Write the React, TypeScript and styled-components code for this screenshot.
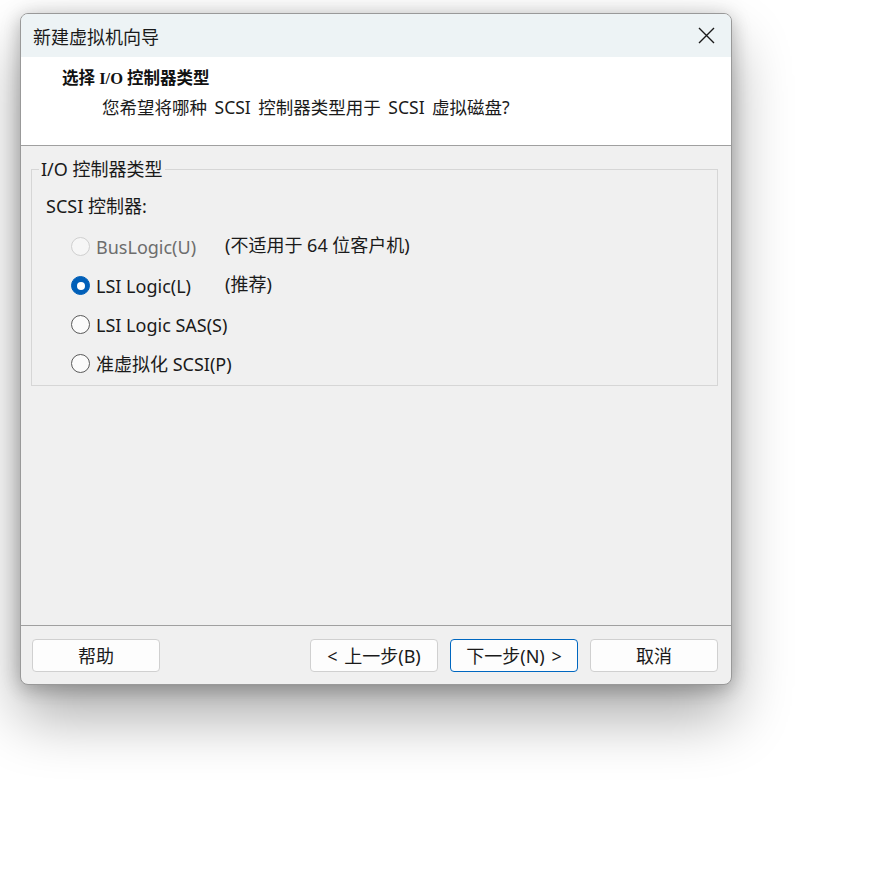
import React from "react";
import styled, { createGlobalStyle } from "styled-components";

const GlobalStyle = createGlobalStyle`
  html, body { margin: 0; padding: 0; background: #ffffff; }
  body {
    font-family: "Noto Sans", "Noto Sans CJK SC", sans-serif;
    color: #1a1a1a;
  }
  * { box-sizing: border-box; }
`;

const Page = styled.div`
  width: 896px;
  height: 875px;
  padding: 13px 0 0 20px;
`;

const Window = styled.div`
  width: 712px;
  height: 672px;
  display: flex;
  flex-direction: column;
  border: 1px solid #999999;
  border-radius: 8px;
  overflow: hidden;
  background: #f0f0f0;
  box-shadow: 0 32px 60px rgba(0, 0, 0, 0.33), 0 6px 18px rgba(0, 0, 0, 0.16),
    0 0 22px rgba(0, 0, 0, 0.12);
`;

const TitleBar = styled.div`
  height: 43px;
  flex: none;
  display: flex;
  align-items: center;
  justify-content: space-between;
  background: #edf3f5;
  padding: 0 16px 0 12px;
`;

const TitleText = styled.span`
  font-family: "Noto Sans CJK SC", sans-serif;
  font-size: 18px;
  color: #1a1a1a;
  line-height: 1;
`;

const CloseButton = styled.div`
  width: 18px;
  height: 18px;
  display: flex;
  align-items: center;
  justify-content: center;
`;

const Header = styled.div`
  height: 89px;
  flex: none;
  background: #ffffff;
  padding: 11px 0 0 41px;
  border-bottom: 1px solid #a0a0a0;
`;

const HeaderTitle = styled.div`
  font-family: "Liberation Serif", "Noto Sans CJK SC", serif;
  font-weight: 700;
  font-size: 16.5px;
  line-height: 22px;
  color: #111;
`;

const HeaderSub = styled.div`
  margin: 6px 0 0 40px;
  font-size: 17.5px;
  line-height: 22px;
  word-spacing: 3px;
  color: #1a1a1a;
`;

const Body = styled.div`
  flex: 1;
  padding: 0 13px 0 10px;
  border-bottom: 1px solid #a0a0a0;
`;

const GroupBox = styled.fieldset`
  margin: 13px 0 0 0;
  padding: 0 14px 2px 14px;
  border: 1px solid #d6d6d6;
  min-width: 0;
`;

const Legend = styled.legend`
  margin-left: -7px;
  padding: 0 2px;
  font-size: 18px;
  line-height: 20px;
  color: #1a1a1a;
`;

const GroupLabel = styled.div`
  margin-top: 16px;
  font-size: 18px;
  line-height: 22px;
`;

const Options = styled.div`
  margin-top: 10px;
  padding-left: 25px;
  display: grid;
  grid-template-columns: 154px auto;
  grid-auto-rows: 39px;
  align-items: center;
`;

const OptionLabel = styled.label<{ $disabled?: boolean }>`
  display: flex;
  align-items: center;
  gap: 6px;
  font-size: 18px;
  line-height: 22px;
  white-space: nowrap;
  color: ${(p) => (p.$disabled ? "#6d6d6d" : "#1a1a1a")};
`;

const Radio = styled.span<{ $checked?: boolean; $disabled?: boolean }>`
  width: 19px;
  height: 19px;
  flex: none;
  border-radius: 50%;
  display: flex;
  align-items: center;
  justify-content: center;
  border: 1px solid
    ${(p) => (p.$checked ? "#005fb8" : p.$disabled ? "#cfcfcf" : "#5a5a5a")};
  background: ${(p) =>
    p.$checked ? "#005fb8" : p.$disabled ? "#f6f6f6" : "#fbfbfb"};
  &::after {
    content: "";
    display: ${(p) => (p.$checked ? "block" : "none")};
    width: 8px;
    height: 8px;
    border-radius: 50%;
    background: #ffffff;
  }
`;

const Note = styled.span`
  font-size: 18px;
  line-height: 22px;
  color: #1a1a1a;
  margin-top: -4px;
`;

const Footer = styled.div`
  height: 58px;
  flex: none;
  display: flex;
  align-items: flex-start;
  padding: 13px 13px 0 11px;
  gap: 12px;
`;

const Spacer = styled.div`
  flex: 1;
`;

const Button = styled.button<{ $primary?: boolean }>`
  width: 128px;
  height: 33px;
  border-radius: 4px;
  border: 1px solid ${(p) => (p.$primary ? "#0067c0" : "#d0d0d0")};
  background: #fdfdfd;
  font-family: "Noto Sans", "Noto Sans CJK SC", sans-serif;
  font-size: 18px;
  word-spacing: 2px;
  color: #1a1a1a;
  padding: 0;
  display: flex;
  align-items: center;
  justify-content: center;
  line-height: 1;
`;

const options = [
  { label: "BusLogic(U)", note: "(不适用于 64 位客户机)", disabled: true },
  { label: "LSI Logic(L)", note: "(推荐)", checked: true },
  { label: "LSI Logic SAS(S)" },
  { label: "准虚拟化 SCSI(P)" },
];

export default function App() {
  return (
    <Page>
      <GlobalStyle />
      <Window>
        <TitleBar>
          <TitleText>新建虚拟机向导</TitleText>
          <CloseButton>
            <svg width="17" height="17" viewBox="0 0 17 17">
              <path
                d="M1 1 L16 16 M16 1 L1 16"
                stroke="#1a1a1a"
                strokeWidth="1.4"
                fill="none"
              />
            </svg>
          </CloseButton>
        </TitleBar>
        <Header>
          <HeaderTitle>选择 I/O 控制器类型</HeaderTitle>
          <HeaderSub>您希望将哪种 SCSI 控制器类型用于 SCSI 虚拟磁盘?</HeaderSub>
        </Header>
        <Body>
          <GroupBox>
            <Legend>I/O 控制器类型</Legend>
            <GroupLabel>SCSI 控制器:</GroupLabel>
            <Options>
              {options.map((o) => (
                <React.Fragment key={o.label}>
                  <OptionLabel $disabled={o.disabled}>
                    <Radio $checked={o.checked} $disabled={o.disabled} />
                    {o.label}
                  </OptionLabel>
                  <Note>{o.note ?? ""}</Note>
                </React.Fragment>
              ))}
            </Options>
          </GroupBox>
        </Body>
        <Footer>
          <Button>帮助</Button>
          <Spacer />
          <Button>&lt; 上一步(B)</Button>
          <Button $primary>下一步(N) &gt;</Button>
          <Button>取消</Button>
        </Footer>
      </Window>
    </Page>
  );
}
